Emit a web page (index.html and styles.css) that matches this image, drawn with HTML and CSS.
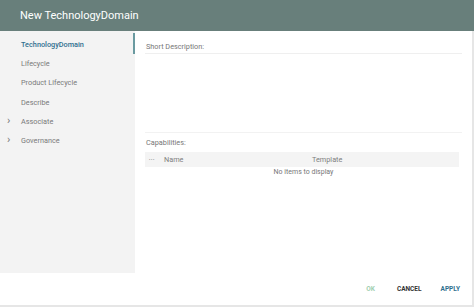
FILE: index.html
```html
<!DOCTYPE html>
<html>
<head>
<meta charset="utf-8">
<link rel="stylesheet" href="styles.css">
</head>
<body>
<div class="dialog">
  <header class="hdr">New TechnologyDomain</header>
  <div class="frame">
    <div class="main">
      <nav class="side">
        <div class="item active">TechnologyDomain</div>
        <div class="item">Lifecycle</div>
        <div class="item">Product Lifecycle</div>
        <div class="item">Describe</div>
        <div class="item exp"><span class="chev">&rsaquo;</span>Associate</div>
        <div class="item exp"><span class="chev">&rsaquo;</span>Governance</div>
      </nav>
      <section class="content">
        <div class="field">
          <div class="label">Short Description:</div>
          <div class="area"></div>
        </div>
        <div class="caps">
          <div class="label">Capabilities:</div>
          <div class="thead">
            <span class="dots">&bull;&bull;&bull;</span>
            <span class="col-name">Name</span>
            <span class="col-tpl">Template</span>
          </div>
          <div class="empty">No items to display</div>
        </div>
      </section>
    </div>
    <footer class="foot">
      <span class="btn ok">OK</span>
      <span class="btn cancel">CANCEL</span>
      <span class="btn apply">APPLY</span>
    </footer>
  </div>
</div>
</body>
</html>
```

FILE: styles.css
```css
html, body { margin: 0; padding: 0; background: #fff; }
body { font-family: Roboto, "Liberation Sans", sans-serif; }
.dialog { width: 474px; height: 307px; display: flex; flex-direction: column; overflow: hidden; }
.hdr { height: 31px; background: #687f7b; color: #fff; font-size: 11px; line-height: 32px; padding-left: 20px; flex: none; }
.frame { flex: 1; display: flex; flex-direction: column; border-right: 2px solid #e6e6e6; border-bottom: 2px solid #e6e6e6; }
.main { height: 242px; display: flex; flex: none; }
.side { width: 135px; background: #f3f3f3; padding-top: 4px; box-sizing: border-box; flex: none; }
.item { position: relative; height: 19.2px; line-height: 20px; font-size: 7.3px; color: #7a7a7a; padding-left: 21px; }
.item.active { color: #2f6f8f; font-weight: 500; }
.item.active::after { content: ""; position: absolute; right: 0; top: -2px; width: 2px; height: 21px; background: #6a9aa0; }
.chev { position: absolute; left: 7px; top: -1px; font-size: 11px; color: #777; }
.content { flex: 1; padding: 0 10px 0 10px; }
.label { font-size: 7.3px; color: #777; padding-left: 1px; }
.field .label { height: 22px; line-height: 32px; border-bottom: 1px solid #efefef; }
.area { height: 78px; border-bottom: 1px solid #f2f2f2; }
.caps .label { height: 18px; line-height: 18px; padding-top: 1px; }
.thead { height: 15px; background: #f4f4f4; display: flex; align-items: center; font-size: 7.3px; color: #808080; margin-right: 3px; }
.dots { width: 15px; padding-left: 4px; font-size: 4px; letter-spacing: 0.6px; color: #777; }
.col-name { width: 148px; }
.empty { text-align: center; font-size: 7px; color: #777; line-height: 10px; padding-left: 0; }
.foot { flex: 1; display: flex; justify-content: flex-end; align-items: center; padding-right: 12px; }
.btn { font-size: 6.5px; font-weight: 700; letter-spacing: 0; margin-left: 22px; }
.ok { color: #9fcfb0; }
.cancel { color: #333; }
.apply { color: #2f6f8f; margin-left: 19px; }
```
